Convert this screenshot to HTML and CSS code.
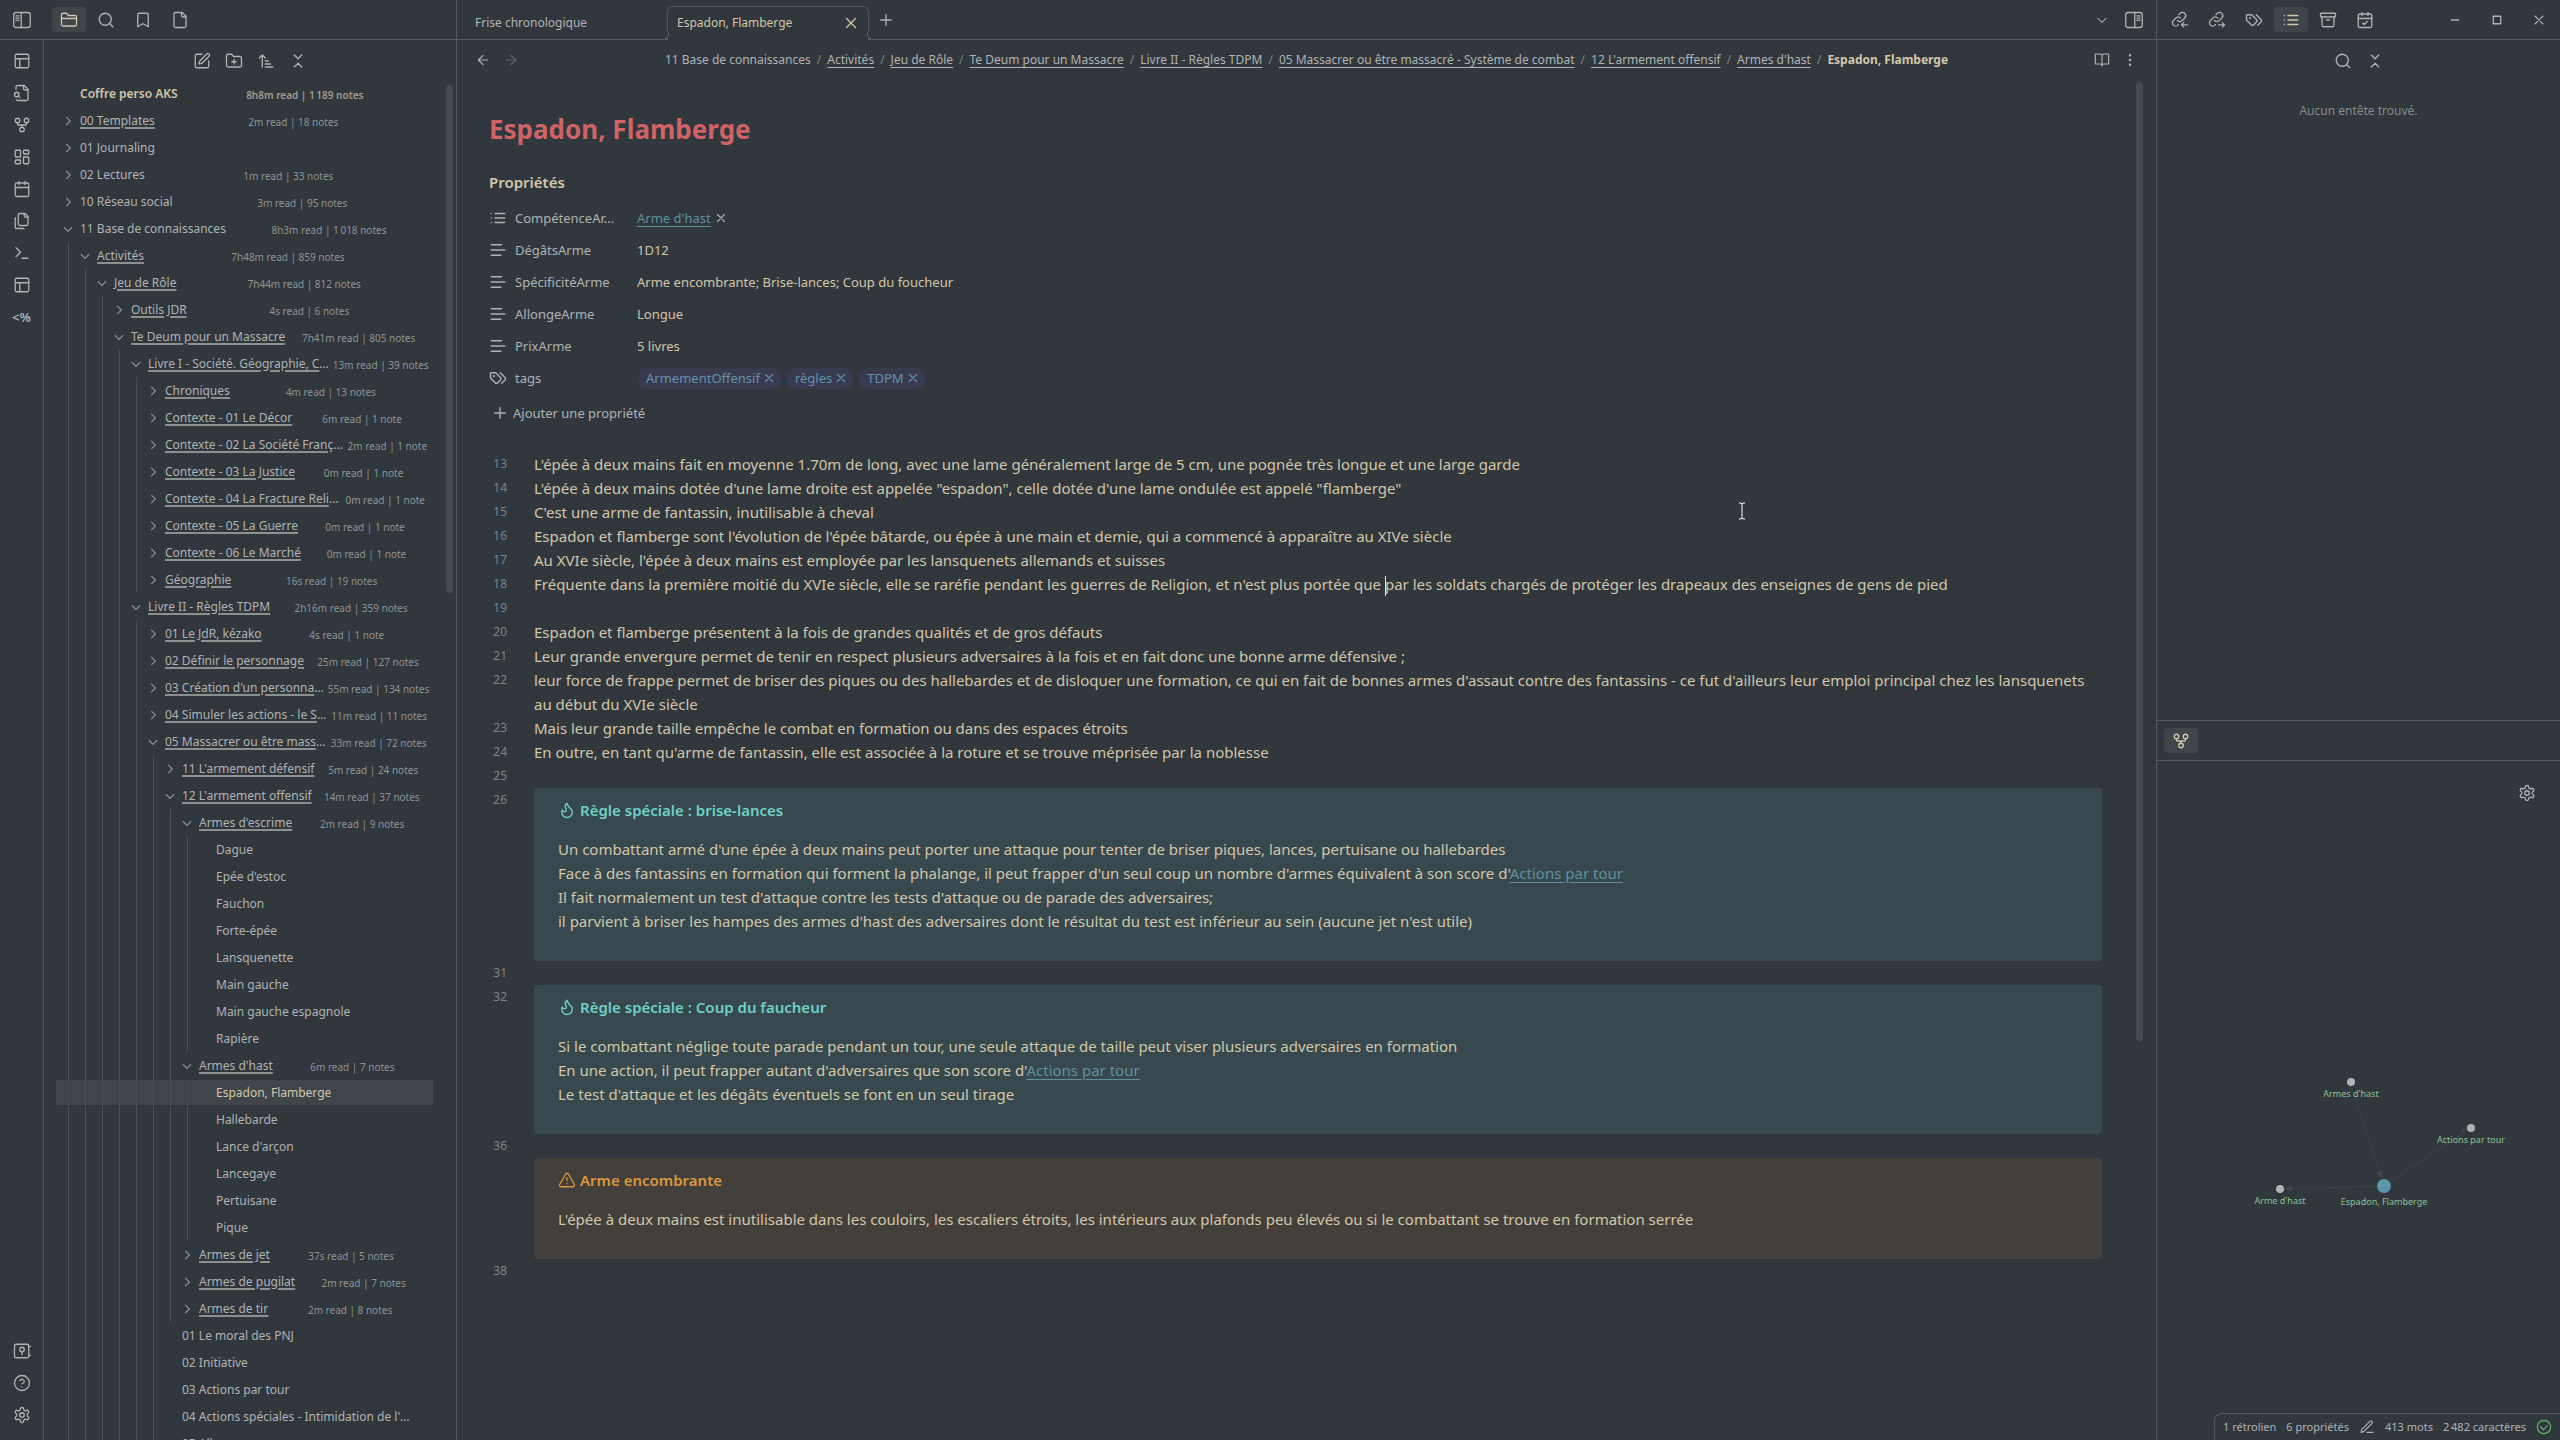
FILE: index.html
```html
<!DOCTYPE html>
<html lang="fr">
<head>
<meta charset="utf-8">
<title>Espadon, Flamberge - Coffre perso AKS</title>
<link rel="stylesheet" href="styles.css">
</head>
<body>
<svg class="sprite" aria-hidden="true">
<symbol id="i-side" viewBox="0 0 24 24"><rect x="1" y="2" width="22" height="20" rx="3"/><path d="M11 2v20M4 6.500h4M4 9.500h4M4 12.500h4"/></symbol>
<symbol id="i-folder" viewBox="0 0 24 24"><path d="M20 20a2 2 0 0 0 2-2V8a2 2 0 0 0-2-2h-7.900a2 2 0 0 1-1.690-.9L9.600 3.900A2 2 0 0 0 7.930 3H4a2 2 0 0 0-2 2v13a2 2 0 0 0 2 2ZM2 10h20"/></symbol>
<symbol id="i-search" viewBox="0 0 24 24"><circle cx="11" cy="11" r="8"/><path d="m21 21-4.300-4.300"/></symbol>
<symbol id="i-bookmark" viewBox="0 0 24 24"><path d="m19 21-7-4-7 4V5a2 2 0 0 1 2-2h10a2 2 0 0 1 2 2v16z"/></symbol>
<symbol id="i-file" viewBox="0 0 24 24"><path d="M15 2H6a2 2 0 0 0-2 2v16a2 2 0 0 0 2 2h12a2 2 0 0 0 2-2V7ZM14 2v4a2 2 0 0 0 2 2h4"/></symbol>
<symbol id="i-layout" viewBox="0 0 24 24"><rect x="3" y="3" width="18" height="18" rx="2"/><path d="M3 9h18M9 21V9"/></symbol>
<symbol id="i-filesearch" viewBox="0 0 24 24"><path d="M14 2v4a2 2 0 0 0 2 2h4M4.268 21a2 2 0 0 0 1.727 1H18a2 2 0 0 0 2-2V7l-5-5H6a2 2 0 0 0-2 2v3M9 18l-1.500-1.500"/><circle cx="5" cy="14" r="3"/></symbol>
<symbol id="i-fork" viewBox="0 0 24 24"><circle cx="12" cy="18" r="3"/><circle cx="6" cy="6" r="3"/><circle cx="18" cy="6" r="3"/><path d="M18 9v2c0 .6-.4 1-1 1H7c-.6 0-1-.4-1-1V9M12 12v3"/></symbol>
<symbol id="i-dash" viewBox="0 0 24 24"><rect x="3" y="3" width="7" height="9" rx="1"/><rect x="14" y="3" width="7" height="5" rx="1"/><rect x="14" y="12" width="7" height="9" rx="1"/><rect x="3" y="16" width="7" height="5" rx="1"/></symbol>
<symbol id="i-cal" viewBox="0 0 24 24"><rect x="3" y="4" width="18" height="18" rx="2"/><path d="M8 2v4M16 2v4M3 10h18"/></symbol>
<symbol id="i-calcheck" viewBox="0 0 24 24"><rect x="3" y="4" width="18" height="18" rx="2"/><path d="M8 2v4M16 2v4M3 10h18M9 16l2 2 4-4"/></symbol>
<symbol id="i-files" viewBox="0 0 24 24"><path d="M20 7h-3a2 2 0 0 1-2-2V2M9 18a2 2 0 0 1-2-2V4a2 2 0 0 1 2-2h7l4 4v10a2 2 0 0 1-2 2ZM3 7.600v12.800A1.600 1.600 0 0 0 4.600 22h9.800"/></symbol>
<symbol id="i-term" viewBox="0 0 24 24"><path d="m4 17 6-6-6-6M12 19h8"/></symbol>
<symbol id="i-vault" viewBox="0 0 24 24"><rect x="2" y="3" width="19" height="18" rx="2"/><circle cx="12" cy="10" r="3"/><path d="M12 13v4M21 6h2M21 18h2"/></symbol>
<symbol id="i-help" viewBox="0 0 24 24"><circle cx="12" cy="12" r="10"/><path d="M9.090 9a3 3 0 0 1 5.830 1c0 2-3 3-3 3M12 17h.01"/></symbol>
<symbol id="i-gear" viewBox="0 0 24 24"><path d="M12.220 2h-.44a2 2 0 0 0-2 2v.18a2 2 0 0 1-1 1.730l-.43.25a2 2 0 0 1-2 0l-.15-.08a2 2 0 0 0-2.730.73l-.22.38a2 2 0 0 0 .73 2.730l.15.1a2 2 0 0 1 1 1.720v.51a2 2 0 0 1-1 1.740l-.15.09a2 2 0 0 0-.73 2.730l.22.38a2 2 0 0 0 2.730.73l.15-.08a2 2 0 0 1 2 0l.43.25a2 2 0 0 1 1 1.730V20a2 2 0 0 0 2 2h.44a2 2 0 0 0 2-2v-.18a2 2 0 0 1 1-1.730l.43-.25a2 2 0 0 1 2 0l.15.08a2 2 0 0 0 2.730-.73l.22-.39a2 2 0 0 0-.73-2.730l-.15-.08a2 2 0 0 1-1-1.740v-.5a2 2 0 0 1 1-1.740l.15-.09a2 2 0 0 0 .73-2.730l-.22-.38a2 2 0 0 0-2.730-.73l-.15.08a2 2 0 0 1-2 0l-.43-.25a2 2 0 0 1-1-1.730V4a2 2 0 0 0-2-2z"/><circle cx="12" cy="12" r="3"/></symbol>
<symbol id="i-edit" viewBox="0 0 24 24"><path d="M12 3H5a2 2 0 0 0-2 2v14a2 2 0 0 0 2 2h14a2 2 0 0 0 2-2v-7M18.375 2.625a1 1 0 0 1 3 3l-9.013 9.014a2 2 0 0 1-.853.505l-2.873.84a.5.5 0 0 1-.62-.62l.84-2.873a2 2 0 0 1 .506-.852z"/></symbol>
<symbol id="i-folderplus" viewBox="0 0 24 24"><path d="M20 20a2 2 0 0 0 2-2V8a2 2 0 0 0-2-2h-7.900a2 2 0 0 1-1.690-.9L9.600 3.900A2 2 0 0 0 7.930 3H4a2 2 0 0 0-2 2v13a2 2 0 0 0 2 2ZM12 10v6M9 13h6"/></symbol>
<symbol id="i-sort" viewBox="0 0 24 24"><path d="m3 8 4-4 4 4M7 4v16M11 12h4M11 16h7M11 20h10"/></symbol>
<symbol id="i-collapse" viewBox="0 0 24 24"><path d="m7 20 5-5 5 5M7 4l5 5 5-5"/></symbol>
<symbol id="i-chev" viewBox="0 0 24 24"><path d="m9 5 7 7-7 7"/></symbol>
<symbol id="i-down" viewBox="0 0 24 24"><path d="m5 9 7 7 7-7"/></symbol>
<symbol id="i-x" viewBox="0 0 24 24"><path d="M18 6 6 18M6 6l12 12"/></symbol>
<symbol id="i-plus" viewBox="0 0 24 24"><path d="M5 12h14M12 5v14"/></symbol>
<symbol id="i-left" viewBox="0 0 24 24"><path d="m12 19-7-7 7-7M19 12H5"/></symbol>
<symbol id="i-right" viewBox="0 0 24 24"><path d="m12 5 7 7-7 7M5 12h14"/></symbol>
<symbol id="i-book" viewBox="0 0 24 24"><path d="M12 5v16M12 5c0-1-1-2-3-2H2v15h7c2 0 3 1 3 3 0-2 1-3 3-3h7V3h-7c-2 0-3 1-3 2"/></symbol>
<symbol id="i-dots" viewBox="0 0 24 24"><circle cx="12" cy="12" r="1"/><circle cx="12" cy="5" r="1"/><circle cx="12" cy="19" r="1"/></symbol>
<symbol id="i-linkin" viewBox="0 0 24 24"><path d="M8.500 12.500a4.500 4.500 0 0 0 6.300.3l3.500-3.500a4.300 4.300 0 0 0-6.100-6.100l-1.700 1.700M13 9.500a4.500 4.500 0 0 0-6.300-.3l-3.500 3.500a4.300 4.300 0 0 0 6.100 6.100l.7-.7M22 18.500h-8M17 15.500l-3 3 3 3"/></symbol>
<symbol id="i-linkout" viewBox="0 0 24 24"><path d="M8.500 12.500a4.500 4.500 0 0 0 6.300.3l3.500-3.500a4.300 4.300 0 0 0-6.100-6.100l-1.700 1.700M13 9.500a4.500 4.500 0 0 0-6.300-.3l-3.500 3.500a4.300 4.300 0 0 0 6.100 6.100l.7-.7M14 18.500h8M19 15.500l3 3-3 3"/></symbol>
<symbol id="i-tags" viewBox="0 0 24 24"><path d="m15 5 6.300 6.300a2.400 2.400 0 0 1 0 3.400L17 19M9.586 5.586A2 2 0 0 0 8.172 5H3a1 1 0 0 0-1 1v5.172a2 2 0 0 0 .586 1.414L8.290 18.290a2.426 2.426 0 0 0 3.420 0l3.580-3.580a2.426 2.426 0 0 0 0-3.420z"/><circle cx="6.500" cy="9.500" r=".5"/></symbol>
<symbol id="i-list" viewBox="0 0 24 24"><path d="M8 6h13M8 12h13M8 18h13M3 6h.01M3 12h.01M3 18h.01"/></symbol>
<symbol id="i-archive" viewBox="0 0 24 24"><rect x="2" y="3" width="20" height="5" rx="1"/><path d="M4 8v11a2 2 0 0 0 2 2h12a2 2 0 0 0 2-2V8M10 12h4"/></symbol>
<symbol id="i-text" viewBox="0 0 24 24"><path d="M17 5H3M21 12H3M16 19H3"/></symbol>
<symbol id="i-flame" viewBox="0 0 24 24"><path d="M8.500 14.500A2.500 2.500 0 0 0 11 12c0-1.380-.5-2-1-3-1.072-2.143-.224-4.054 2-6 .5 2.500 2 4.900 4 6.500 2 1.600 3 3.500 3 5.500a7 7 0 1 1-14 0c0-1.153.433-2.294 1-3a2.500 2.500 0 0 0 2.500 2.500z"/></symbol>
<symbol id="i-warn" viewBox="0 0 24 24"><path d="m21.730 18-8-14a2 2 0 0 0-3.480 0l-8 14A2 2 0 0 0 4 21h16a2 2 0 0 0 1.730-3M12 9v4M12 17h.01"/></symbol>
<symbol id="i-pen" viewBox="0 0 24 24"><path d="M12 20h9M16.500 3.500a2.120 2.120 0 0 1 3 3L7 19l-4 1 1-4Z"/></symbol>
<symbol id="i-ok" viewBox="0 0 24 24"><circle cx="12" cy="12" r="10"/><path d="m7 12 4 4 6-6"/></symbol>
<symbol id="i-min" viewBox="0 0 24 24"><path d="M7 12h10"/></symbol>
<symbol id="i-max" viewBox="0 0 24 24"><rect x="7" y="7" width="10" height="10"/></symbol>
</svg>

<div class="app">
<aside class="left">
  <header class="bar">
    <button class="toggle" aria-label="Replier"><svg class="ic"><use href="#i-side"/></svg></button>
    <button class="tabicon on" aria-label="Fichiers"><svg class="ic"><use href="#i-folder"/></svg></button>
    <button class="tabicon" aria-label="Rechercher"><svg class="ic"><use href="#i-search"/></svg></button>
    <button class="tabicon" aria-label="Signets"><svg class="ic"><use href="#i-bookmark"/></svg></button>
    <button class="tabicon" aria-label="Fichier"><svg class="ic"><use href="#i-file"/></svg></button>
  </header>
  <div class="leftbody">
    <nav class="ribbon">
      <button aria-label="Disposition"><svg class="ic"><use href="#i-layout"/></svg></button>
      <button aria-label="Ouvrir"><svg class="ic"><use href="#i-filesearch"/></svg></button>
      <button aria-label="Graphe"><svg class="ic"><use href="#i-fork"/></svg></button>
      <button aria-label="Canevas"><svg class="ic"><use href="#i-dash"/></svg></button>
      <button aria-label="Calendrier"><svg class="ic"><use href="#i-cal"/></svg></button>
      <button aria-label="Copies"><svg class="ic"><use href="#i-files"/></svg></button>
      <button aria-label="Commandes"><svg class="ic"><use href="#i-term"/></svg></button>
      <button aria-label="Espaces"><svg class="ic"><use href="#i-layout"/></svg></button>
      <button class="tpl">&lt;%</button>
      <span class="spacer"></span>
      <button aria-label="Coffre"><svg class="ic"><use href="#i-vault"/></svg></button>
      <button aria-label="Aide"><svg class="ic"><use href="#i-help"/></svg></button>
      <button aria-label="Réglages"><svg class="ic"><use href="#i-gear"/></svg></button>
    </nav>
    <div class="explorer">
      <div class="tools">
        <button aria-label="Nouvelle note"><svg class="ic"><use href="#i-edit"/></svg></button>
        <button aria-label="Nouveau dossier"><svg class="ic"><use href="#i-folderplus"/></svg></button>
        <button aria-label="Trier"><svg class="ic"><use href="#i-sort"/></svg></button>
        <button aria-label="Tout replier"><svg class="ic"><use href="#i-collapse"/></svg></button>
      </div>
      <div class="treewrap">
      <ul class="tree">
        <li><div class="row file root"><span class="name">Coffre perso AKS</span><small>8h8m read | 1&#8239;189 notes</small></div></li>
        <li><div class="row"><svg class="ch"><use href="#i-chev"/></svg><span class="name"><a href="#">00 Templates</a></span><small>2m read | 18 notes</small></div></li>
        <li><div class="row"><svg class="ch"><use href="#i-chev"/></svg><span class="name">01 Journaling</span></div></li>
        <li><div class="row"><svg class="ch"><use href="#i-chev"/></svg><span class="name">02 Lectures</span><small>1m read | 33 notes</small></div></li>
        <li><div class="row"><svg class="ch"><use href="#i-chev"/></svg><span class="name">10 Réseau social</span><small>3m read | 95 notes</small></div></li>
        <li><div class="row"><svg class="ch"><use href="#i-down"/></svg><span class="name">11 Base de connaissances</span><small>8h3m read | 1&#8239;018 notes</small></div>
        <ul>
          <li><div class="row"><svg class="ch"><use href="#i-down"/></svg><span class="name"><a href="#">Activités</a></span><small>7h48m read | 859 notes</small></div>
          <ul>
            <li><div class="row"><svg class="ch"><use href="#i-down"/></svg><span class="name"><a href="#">Jeu de Rôle</a></span><small>7h44m read | 812 notes</small></div>
            <ul>
              <li><div class="row"><svg class="ch"><use href="#i-chev"/></svg><span class="name"><a href="#">Outils JDR</a></span><small>4s read | 6 notes</small></div></li>
              <li><div class="row"><svg class="ch"><use href="#i-down"/></svg><span class="name"><a href="#">Te Deum pour un Massacre</a></span><small>7h41m read | 805 notes</small></div>
              <ul>
                <li><div class="row"><svg class="ch"><use href="#i-down"/></svg><span class="name"><a href="#">Livre I - Société. Géographie, C</a>…</span><small>13m read | 39 notes</small></div>
                <ul>
                  <li><div class="row"><svg class="ch"><use href="#i-chev"/></svg><span class="name"><a href="#">Chroniques</a></span><small>4m read | 13 notes</small></div></li>
                  <li><div class="row"><svg class="ch"><use href="#i-chev"/></svg><span class="name"><a href="#">Contexte - 01 Le Décor</a></span><small>6m read | 1 note</small></div></li>
                  <li><div class="row"><svg class="ch"><use href="#i-chev"/></svg><span class="name"><a href="#">Contexte - 02 La Société Franç</a>…</span><small>2m read | 1 note</small></div></li>
                  <li><div class="row"><svg class="ch"><use href="#i-chev"/></svg><span class="name"><a href="#">Contexte - 03 La Justice</a></span><small>0m read | 1 note</small></div></li>
                  <li><div class="row"><svg class="ch"><use href="#i-chev"/></svg><span class="name"><a href="#">Contexte - 04 La Fracture Reli</a>…</span><small>0m read | 1 note</small></div></li>
                  <li><div class="row"><svg class="ch"><use href="#i-chev"/></svg><span class="name"><a href="#">Contexte - 05 La Guerre</a></span><small>0m read | 1 note</small></div></li>
                  <li><div class="row"><svg class="ch"><use href="#i-chev"/></svg><span class="name"><a href="#">Contexte - 06 Le Marché</a></span><small>0m read | 1 note</small></div></li>
                  <li><div class="row"><svg class="ch"><use href="#i-chev"/></svg><span class="name"><a href="#">Géographie</a></span><small>16s read | 19 notes</small></div></li>
                </ul></li>
                <li><div class="row"><svg class="ch"><use href="#i-down"/></svg><span class="name"><a href="#">Livre II - Règles TDPM</a></span><small>2h16m read | 359 notes</small></div>
                <ul>
                  <li><div class="row"><svg class="ch"><use href="#i-chev"/></svg><span class="name"><a href="#">01 Le JdR, kézako</a></span><small>4s read | 1 note</small></div></li>
                  <li><div class="row"><svg class="ch"><use href="#i-chev"/></svg><span class="name"><a href="#">02 Définir le personnage</a></span><small>25m read | 127 notes</small></div></li>
                  <li><div class="row"><svg class="ch"><use href="#i-chev"/></svg><span class="name"><a href="#">03 Création d'un personna</a>…</span><small>55m read | 134 notes</small></div></li>
                  <li><div class="row"><svg class="ch"><use href="#i-chev"/></svg><span class="name"><a href="#">04 Simuler les actions - le S</a>…</span><small>11m read | 11 notes</small></div></li>
                  <li><div class="row"><svg class="ch"><use href="#i-down"/></svg><span class="name"><a href="#">05 Massacrer ou être mass</a>…</span><small>33m read | 72 notes</small></div>
                  <ul>
                    <li><div class="row"><svg class="ch"><use href="#i-chev"/></svg><span class="name"><a href="#">11 L'armement défensif</a></span><small>5m read | 24 notes</small></div></li>
                    <li><div class="row"><svg class="ch"><use href="#i-down"/></svg><span class="name"><a href="#">12 L'armement offensif</a></span><small>14m read | 37 notes</small></div>
                    <ul>
                      <li><div class="row"><svg class="ch"><use href="#i-down"/></svg><span class="name"><a href="#">Armes d'escrime</a></span><small>2m read | 9 notes</small></div>
                      <ul>
                        <li><div class="row file"><span class="name">Dague</span></div></li>
                        <li><div class="row file"><span class="name">Epée d'estoc</span></div></li>
                        <li><div class="row file"><span class="name">Fauchon</span></div></li>
                        <li><div class="row file"><span class="name">Forte-épée</span></div></li>
                        <li><div class="row file"><span class="name">Lansquenette</span></div></li>
                        <li><div class="row file"><span class="name">Main gauche</span></div></li>
                        <li><div class="row file"><span class="name">Main gauche espagnole</span></div></li>
                        <li><div class="row file"><span class="name">Rapière</span></div></li>
                      </ul></li>
                      <li><div class="row"><svg class="ch"><use href="#i-down"/></svg><span class="name"><a href="#">Armes d'hast</a></span><small>6m read | 7 notes</small></div>
                      <ul>
                        <li><div class="row file active"><span class="name">Espadon, Flamberge</span></div></li>
                        <li><div class="row file"><span class="name">Hallebarde</span></div></li>
                        <li><div class="row file"><span class="name">Lance d'arçon</span></div></li>
                        <li><div class="row file"><span class="name">Lancegaye</span></div></li>
                        <li><div class="row file"><span class="name">Pertuisane</span></div></li>
                        <li><div class="row file"><span class="name">Pique</span></div></li>
                      </ul></li>
                      <li><div class="row"><svg class="ch"><use href="#i-chev"/></svg><span class="name"><a href="#">Armes de jet</a></span><small>37s read | 5 notes</small></div></li>
                      <li><div class="row"><svg class="ch"><use href="#i-chev"/></svg><span class="name"><a href="#">Armes de pugilat</a></span><small>2m read | 7 notes</small></div></li>
                      <li><div class="row"><svg class="ch"><use href="#i-chev"/></svg><span class="name"><a href="#">Armes de tir</a></span><small>2m read | 8 notes</small></div></li>
                    </ul></li>
                    <li><div class="row file"><span class="name">01 Le moral des PNJ</span></div></li>
                    <li><div class="row file"><span class="name">02 Initiative</span></div></li>
                    <li><div class="row file"><span class="name">03 Actions par tour</span></div></li>
                    <li><div class="row file"><span class="name">04 Actions spéciales - Intimidation de l'…</span></div></li>
                    <li><div class="row file"><span class="name">05 All</span></div></li>
                  </ul></li>
                </ul></li>
              </ul></li>
            </ul></li>
          </ul></li>
        </ul></li>
      </ul>
      <div class="thumb tree-thumb"></div>
      </div>
    </div>
  </div>
</aside>

<main class="center">
  <header class="bar tabs">
    <div class="tab">Frise chronologique</div>
    <div class="tab current"><span>Espadon, Flamberge</span><button aria-label="Fermer"><svg class="ic"><use href="#i-x"/></svg></button></div>
    <button class="newtab" aria-label="Nouvel onglet"><svg class="ic"><use href="#i-plus"/></svg></button>
    <span class="spacer"></span>
    <button class="sq" aria-label="Liste des onglets"><svg class="ic sm"><use href="#i-down"/></svg></button>
    <button class="sq" aria-label="Replier"><svg class="ic flip"><use href="#i-side"/></svg></button>
  </header>
  <div class="viewbar">
    <div class="hist"><button aria-label="Précédent"><svg class="ic md"><use href="#i-left"/></svg></button><button class="dim" aria-label="Suivant"><svg class="ic md"><use href="#i-right"/></svg></button></div>
    <nav class="crumbs"><span>11 Base de connaissances</span><i>/</i><a href="#">Activités</a><i>/</i><a href="#">Jeu de Rôle</a><i>/</i><a href="#">Te Deum pour un Massacre</a><i>/</i><a href="#">Livre II - Règles TDPM</a><i>/</i><a href="#">05 Massacrer ou être massacré - Système de combat</a><i>/</i><a href="#">12 L'armement offensif</a><i>/</i><a href="#">Armes d'hast</a><i>/</i><b>Espadon, Flamberge</b></nav>
    <div class="hist end"><button aria-label="Lecture"><svg class="ic md"><use href="#i-book"/></svg></button><button aria-label="Plus"><svg class="ic md"><use href="#i-dots"/></svg></button></div>
  </div>
  <div class="scroll">
    <article class="note">
      <h1>Espadon, Flamberge</h1>
      <h2>Propriétés</h2>
      <dl class="props">
        <div><dt><svg class="ic"><use href="#i-list"/></svg><span>CompétenceAr…</span></dt><dd><a class="lk" href="#">Arme d'hast</a><button class="rm" aria-label="Retirer"><svg class="ic xs"><use href="#i-x"/></svg></button></dd></div>
        <div><dt><svg class="ic"><use href="#i-text"/></svg><span>DégâtsArme</span></dt><dd>1D12</dd></div>
        <div><dt><svg class="ic"><use href="#i-text"/></svg><span>SpécificitéArme</span></dt><dd>Arme encombrante; Brise-lances; Coup du foucheur</dd></div>
        <div><dt><svg class="ic"><use href="#i-text"/></svg><span>AllongeArme</span></dt><dd>Longue</dd></div>
        <div><dt><svg class="ic"><use href="#i-text"/></svg><span>PrixArme</span></dt><dd>5 livres</dd></div>
        <div><dt><svg class="ic"><use href="#i-tags"/></svg><span>tags</span></dt><dd class="pills"><span class="pill">ArmementOffensif<svg class="ic xs"><use href="#i-x"/></svg></span><span class="pill">règles<svg class="ic xs"><use href="#i-x"/></svg></span><span class="pill">TDPM<svg class="ic xs"><use href="#i-x"/></svg></span></dd></div>
      </dl>
      <button class="add"><svg class="ic"><use href="#i-plus"/></svg>Ajouter une propriété</button>
      <div class="editor">
        <span class="n">13</span><p>L'épée à deux mains fait en moyenne 1.70m de long, avec une lame généralement large de 5 cm, une pognée très longue et une large garde</p>
        <span class="n">14</span><p>L'épée à deux mains dotée d'une lame droite est appelée "espadon", celle dotée d'une lame ondulée est appelé "flamberge"</p>
        <span class="n">15</span><p>C'est une arme de fantassin, inutilisable à cheval</p>
        <span class="n">16</span><p>Espadon et flamberge sont l'évolution de l'épée bâtarde, ou épée à une main et demie, qui a commencé à apparaître au XIVe siècle</p>
        <span class="n">17</span><p>Au XVIe siècle, l'épée à deux mains est employée par les lansquenets allemands et suisses</p>
        <span class="n">18</span><p>Fréquente dans la première moitié du XVIe siècle, elle se raréfie pendant les guerres de Religion, et n'est plus portée que <span class="caret"></span>par les soldats chargés de protéger les drapeaux des enseignes de gens de pied</p>
        <span class="n">19</span><p></p>
        <span class="n">20</span><p>Espadon et flamberge présentent à la fois de grandes qualités et de gros défauts</p>
        <span class="n">21</span><p>Leur grande envergure permet de tenir en respect plusieurs adversaires à la fois et en fait donc une bonne arme défensive ;</p>
        <span class="n">22</span><p>leur force de frappe permet de briser des piques ou des hallebardes et de disloquer une formation, ce qui en fait de bonnes armes d'assaut contre des fantassins - ce fut d'ailleurs leur emploi principal chez les lansquenets au début du XVIe siècle</p>
        <span class="n">23</span><p>Mais leur grande taille empêche le combat en formation ou dans des espaces étroits</p>
        <span class="n">24</span><p>En outre, en tant qu'arme de fantassin, elle est associée à la roture et se trouve méprisée par la noblesse</p>
        <span class="n">25</span><p></p>
        <span class="n">26</span><section class="callout"><h3><svg class="ic"><use href="#i-flame"/></svg>Règle spéciale : brise-lances</h3>
          <p>Un combattant armé d'une épée à deux mains peut porter une attaque pour tenter de briser piques, lances, pertuisane ou hallebardes<br>Face à des fantassins en formation qui forment la phalange, il peut frapper d'un seul coup un nombre d'armes équivalent à son score d'<a class="lk" href="#">Actions par tour</a><br>Il fait normalement un test d'attaque contre les tests d'attaque ou de parade des adversaires;<br>il parvient à briser les hampes des armes d'hast des adversaires dont le résultat du test est inférieur au sein (aucune jet n'est utile)</p></section>
        <span class="n">31</span><p></p>
        <span class="n">32</span><section class="callout"><h3><svg class="ic"><use href="#i-flame"/></svg>Règle spéciale : Coup du faucheur</h3>
          <p>Si le combattant néglige toute parade pendant un tour, une seule attaque de taille peut viser plusieurs adversaires en formation<br>En une action, il peut frapper autant d'adversaires que son score d'<a class="lk" href="#">Actions par tour</a><br>Le test d'attaque et les dégâts éventuels se font en un seul tirage</p></section>
        <span class="n">36</span><p></p>
        <span class="n"></span><section class="callout warn"><h3><svg class="ic"><use href="#i-warn"/></svg>Arme encombrante</h3>
          <p>L'épée à deux mains est inutilisable dans les couloirs, les escaliers étroits, les intérieurs aux plafonds peu élevés ou si le combattant se trouve en formation serrée</p></section>
        <span class="n">38</span><p></p>
      </div>
    </article>
    <div class="thumb note-thumb"></div>
  </div>
</main>

<aside class="right">
  <header class="bar rbar">
    <button class="tabicon" aria-label="Rétroliens"><svg class="ic"><use href="#i-linkin"/></svg></button>
    <button class="tabicon" aria-label="Liens sortants"><svg class="ic"><use href="#i-linkout"/></svg></button>
    <button class="tabicon" aria-label="Tags"><svg class="ic"><use href="#i-tags"/></svg></button>
    <button class="tabicon on" aria-label="Plan"><svg class="ic"><use href="#i-list"/></svg></button>
    <button class="tabicon" aria-label="Archive"><svg class="ic"><use href="#i-archive"/></svg></button>
    <button class="tabicon" aria-label="Agenda"><svg class="ic"><use href="#i-calcheck"/></svg></button>
    <span class="spacer"></span>
    <button class="win" aria-label="Réduire"><svg class="ic"><use href="#i-min"/></svg></button>
    <button class="win" aria-label="Agrandir"><svg class="ic"><use href="#i-max"/></svg></button>
    <button class="win" aria-label="Quitter"><svg class="ic md"><use href="#i-x"/></svg></button>
  </header>
  <section class="outline">
    <div class="tools"><button aria-label="Rechercher"><svg class="ic"><use href="#i-search"/></svg></button><button aria-label="Tout replier"><svg class="ic"><use href="#i-collapse"/></svg></button></div>
    <p>Aucun entête trouvé.</p>
  </section>
  <section class="graph">
    <header class="gbar"><button class="tabicon on" aria-label="Graphe local"><svg class="ic"><use href="#i-fork"/></svg></button></header>
    <button class="gearbtn" aria-label="Réglages du graphe"><svg class="ic"><use href="#i-gear"/></svg></button>
    <svg class="net" width="403" height="480">
      <g class="edges"><path d="M194 325 226 421"/><path d="M227 425 314 367"/><path d="M227 425 122 428"/></g>
      <g class="heads"><path d="m225 417-6-5 7-3z"/><path d="m307 371 3-6-7 5z"/><path d="m127 428 8-3v6z"/></g>
      <g class="dots"><circle cx="194" cy="321" r="4"/><circle cx="314" cy="367" r="4"/><circle cx="123" cy="428" r="4"/></g>
      <circle class="hub" cx="227" cy="425" r="7"/>
      <text x="194" y="336">Armes d'hast</text><text x="314" y="382">Actions par tour</text><text x="123" y="443">Arme d'hast</text><text x="227" y="444">Espadon, Flamberge</text>
    </svg>
  </section>
</aside>
</div>

<footer class="status"><span>1 rétrolien</span><span>6 propriétés</span><svg class="ic"><use href="#i-pen"/></svg><span>413 mots</span><span>2&#8239;482 caractères</span><svg class="ic ok"><use href="#i-ok"/></svg></footer>
<svg class="pointer" width="8" height="18" aria-hidden="true"><path d="M1 1h2l1 1 1-1h2M4 2v14M1 17h2l1-1 1 1h2"/></svg>
</body>
</html>
```
FILE: styles.css
```css
:root {
  --bg: #30373d;
  --line: #535a60;
  --muted: #b0b3b4;
  --faint: #7d8585;
  --text: #d3c6aa;
  --hover: #3f464b;
  --link: #5f909f;
}
* { box-sizing: border-box; }
body {
  margin: 0;
  height: 100vh;
  overflow: hidden;
  background: var(--bg);
  color: var(--muted);
  font: 12px/24px "Noto Sans", "Open Sans", sans-serif;
}
button {
  display: flex;
  align-items: center;
  justify-content: center;
  margin: 0;
  padding: 0;
  border: 0;
  background: none;
  color: inherit;
  font: inherit;
}
a { color: inherit; text-underline-offset: 3px; }
ul, dl, dd, p, h1, h2, h3 { margin: 0; padding: 0; }
ul { list-style: none; }
.sprite { position: absolute; width: 0; height: 0; }
.ic {
  flex: none;
  width: 18px;
  height: 18px;
  fill: none;
  stroke: currentColor;
  stroke-width: 1.75;
  stroke-linecap: round;
  stroke-linejoin: round;
}
.ic.md { width: 16px; height: 16px; }
.ic.sm { width: 14px; height: 14px; }
.ic.xs { width: 14px; height: 14px; stroke-width: 2; }
.flip { transform: scaleX(-1); }
.spacer { flex: 1; }

.app {
  display: grid;
  grid-template-columns: 457px minmax(0, 1fr) 404px;
  height: 100%;
}
.bar {
  display: flex;
  flex: none;
  align-items: center;
  height: 40px;
  border-bottom: 1px solid var(--line);
}
.tabicon {
  width: 34px;
  height: 25px;
  border-radius: 4px;
}
.tabicon.on { background: var(--hover); color: var(--text); }

/* left sidebar */
.left {
  display: flex;
  flex-direction: column;
  min-height: 0;
  border-right: 1px solid var(--line);
}
.left .bar { gap: 3px; }
.toggle { width: 44px; margin-right: 5px; }
.leftbody { display: flex; flex: 1; min-height: 0; }
.ribbon {
  display: flex;
  flex: none;
  flex-direction: column;
  width: 44px;
  padding: 5px 0 9px;
  border-right: 1px solid var(--line);
}
.ribbon button { height: 32px; }
.ribbon .tpl { font-size: 13px; font-weight: 600; }
.explorer { display: flex; flex: 1; flex-direction: column; min-width: 0; }
.tools {
  display: flex;
  flex: none;
  justify-content: center;
  height: 40px;
}
.tools button { width: 32px; height: 41px; }
.treewrap {
  display: flex;
  flex: 1;
  gap: 13px;
  min-height: 0;
  padding: 0 3px 0 12px;
  overflow: hidden;
}
.tree { position: relative; isolation: isolate; flex: 1; min-width: 0; }
.tree ul { margin-left: 12px; padding-left: 4px; border-left: 1px solid #484f55; }
.row {
  display: flex;
  align-items: center;
  height: 27px;
  padding-right: 5px;
}
.row.file { padding-left: 24px; }
.ch {
  flex: none;
  width: 14px;
  height: 14px;
  margin: 0 5px;
  fill: none;
  stroke: #8d9294;
  stroke-width: 2;
}
.name {
  flex: none;
  white-space: nowrap;
  line-height: 26px;
}
.name a { text-decoration-thickness: 2px; text-decoration-color: #8a928f; text-underline-offset: 2px; }
.row small {
  flex: none;
  margin: 2px auto 0;
  border-left: 4px solid transparent;
  font-size: 10px;
  color: #8f9494;
}
.row.root { color: var(--text); font-weight: 600; }
.row.root small { color: #a49e8c; }
.row.active { color: var(--text); }
.row.active::before {
  content: "";
  position: absolute;
  z-index: -1;
  left: 0;
  right: 0;
  height: 25px;
  background: var(--hover);
}
.thumb { flex: none; width: 7px; border-radius: 4px; background: #444b51; }
.tree-thumb { height: 508px; margin-top: 5px; }

/* centre */
.center { display: flex; flex-direction: column; min-width: 0; min-height: 0; }
.tabs { padding-left: 8px; align-items: stretch; padding-right: 6px; }
.tab {
  display: flex;
  flex: none;
  align-items: center;
  justify-content: space-between;
  width: 202px;
  margin: 6px 0 -1px;
  padding: 0 8px 2px 9px;
  border: 1px solid transparent;
  border-bottom: 0;
}
.tab.current {
  position: relative;
  border-color: var(--line);
  border-radius: 6px 6px 0 0;
  background: var(--bg);
  color: var(--text);
}
.tab.current::before, .tab.current::after {
  content: "";
  position: absolute;
  bottom: 0;
  width: 7px;
  height: 7px;
  border-bottom: 1px solid var(--line);
  background: var(--bg);
}
.tab.current::before { left: -7px; border-right: 1px solid var(--line); border-bottom-right-radius: 6px; }
.tab.current::after { right: -7px; border-left: 1px solid var(--line); border-bottom-left-radius: 6px; }
.newtab { width: 34px; }
.sq { width: 32px; }
.viewbar { display: flex; flex: none; align-items: center; height: 40px; padding: 0 12px; }
.hist { display: flex; flex: none; width: 80px; }
.hist button { width: 28px; height: 28px; }
.hist.end { justify-content: flex-end; }
.dim { opacity: .4; }
.crumbs { display: flex; flex: 1; justify-content: center; white-space: nowrap; }
.crumbs i { padding: 0 6px; font-style: normal; color: var(--faint); }
.crumbs b { color: var(--text); }
.scroll { display: flex; flex: 1; min-height: 0; overflow: hidden; }
.note { flex: 1; min-width: 0; padding: 27px 34px 0 32px; }
.note h1 { font-size: 26px; line-height: 44px; color: #cf6365; }
.note h2 { margin: 20px 0 9px; font-size: 15px; line-height: 22px; font-weight: 600; color: var(--text); }
.props { font-size: 13px; }
.props > div { display: flex; height: 32px; align-items: center; }
.props dt { display: flex; flex: none; align-items: center; gap: 8px; width: 148px; }
.props dd { display: flex; align-items: center; color: var(--text); }
.lk { color: var(--link); }
.rm { width: 20px; color: var(--muted); }
.props .pills { gap: 4px; }
.pill {
  display: flex;
  align-items: center;
  gap: 2px;
  height: 21px;
  padding: 0 6px 0 9px;
  border-radius: 11px;
  background: #383b50;
  color: #6493ae;
}
.add { gap: 4px; height: 32px; margin-top: 3px; padding-left: 2px; font-size: 13px; }
.editor {
  display: grid;
  grid-template-columns: 18px minmax(0, 1fr);
  column-gap: 27px;
  margin-top: 23px;
  font-size: 15px;
  color: var(--text);
}
.editor > p { min-height: 24px; padding-right: 8px; }
.n { font-size: 12px; text-align: right; color: var(--faint); }
.caret { display: inline-block; width: 1px; height: 20px; margin-right: -1px; background: #e8e4d8; vertical-align: middle; }
.callout { padding: 10px 24px 28px; border-radius: 4px; background: #37494e; }
.callout h3 { display: flex; align-items: center; gap: 4px; margin-bottom: 15px; font-size: 15px; font-weight: 600; color: #6fd0c8; }
.callout.warn { background: #43403c; }
.callout.warn h3 { color: #dc963f; }
.note-thumb { height: 959px; margin: 2px 13px 0 0; }

/* right sidebar */
.right {
  display: flex;
  flex-direction: column;
  min-height: 0;
  border-left: 1px solid var(--line);
}
.rbar { gap: 3px; padding-left: 6px; }
.win { width: 42px; margin-right: -3px; }
.win:last-child { margin-right: 0; }
.outline { flex: 1; text-align: center; font-size: 12px; color: #858b8c; }
.outline .tools { color: var(--muted); }
.outline p { margin-top: 19px; }
.graph { position: relative; height: 721px; max-height: 50%; flex: none; border-top: 1px solid var(--line); }
.gbar { display: flex; align-items: center; height: 40px; padding-left: 7px; border-bottom: 1px solid var(--line); }
.gearbtn { position: absolute; top: 56px; right: 17px; width: 32px; height: 32px; }
.net { display: block; width: 403px; height: 480px; }
.edges { stroke: #3e4246; stroke-width: 1; }
.heads { fill: #42474b; }
.dots { fill: #b3b3b3; }
.hub { fill: #5e96a9; }
.net text { fill: #8cc29b; font-size: 9px; text-anchor: middle; }

.status {
  position: absolute;
  right: 0;
  bottom: 0;
  display: flex;
  align-items: center;
  gap: 10px;
  height: 27px;
  padding: 0 8px;
  border: 1px solid var(--line);
  border-width: 1px 0 0 1px;
  border-radius: 8px 0 0 0;
  background: var(--bg);
  font-size: 11px;
}
.status .ic { width: 16px; height: 16px; }
.status .ok { color: #5fb96a; }
.pointer { position: absolute; left: calc(68% - 3px); top: 502px; fill: none; stroke: #fff; }
```
